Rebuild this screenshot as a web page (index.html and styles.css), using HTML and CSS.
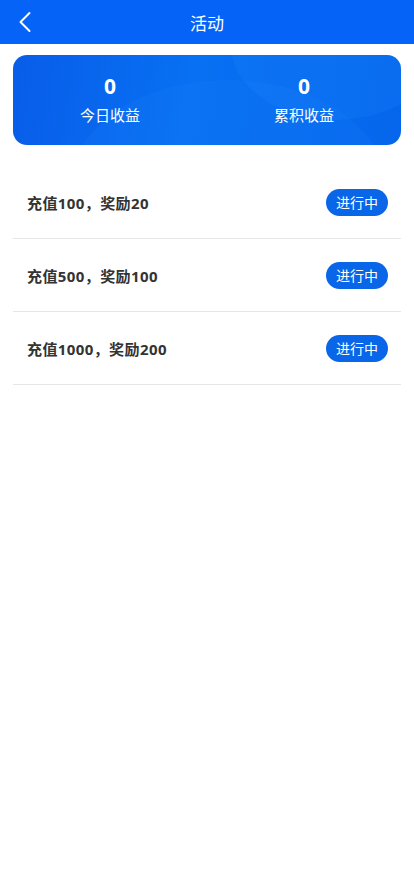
FILE: index.html
```html
<!DOCTYPE html>
<html lang="zh-CN">

<head>
  <meta charset="UTF-8">
  <meta name="viewport" content="width=device-width, initial-scale=1.0">
  <title>活动</title>
  <link rel="stylesheet" href="styles.css">
</head>

<body>
  <div class="page-wrapper">
    <div class="nav-bar">
      <a class="back-btn" href="#">
        <svg width="14" height="22" viewBox="0 0 14 22" fill="none">
          <path d="M11.5 2 L2.5 11 L11.5 20" stroke="#fff" stroke-width="2" stroke-linecap="round" stroke-linejoin="round" />
        </svg>
      </a>
      <h1>活动</h1>
    </div>

    <div class="summary-card">
      <div class="stat">
        <div class="stat-value">0</div>
        <div class="stat-label">今日收益</div>
      </div>
      <div class="stat">
        <div class="stat-value">0</div>
        <div class="stat-label">累积收益</div>
      </div>
    </div>

    <ul class="activity-list">
      <li class="activity-item">
        <span class="activity-title">充值100，奖励20</span>
        <span class="status-badge">进行中</span>
      </li>
      <li class="activity-item">
        <span class="activity-title">充值500，奖励100</span>
        <span class="status-badge">进行中</span>
      </li>
      <li class="activity-item">
        <span class="activity-title">充值1000，奖励200</span>
        <span class="status-badge">进行中</span>
      </li>
    </ul>
  </div>
</body>

</html>
```

FILE: styles.css
```css
* {
  margin: 0;
  padding: 0;
  box-sizing: border-box;
  font-family: "Noto Sans", "Noto Sans CJK SC", sans-serif;
}

html,
body {
  width: 100%;
  height: 100%;
  background: #fff;
}

.nav-bar {
  height: 44px;
  background-color: #0563f7;
  display: flex;
  align-items: center;
  justify-content: center;
  position: relative;
}

.nav-bar h1 {
  font-size: 17px;
  font-weight: 400;
  color: #fff;
}

.back-btn {
  position: absolute;
  left: 18px;
  top: 11px;
  display: flex;
}

.summary-card {
  margin: 11px 13px 0;
  height: 90px;
  border-radius: 14px;
  background: linear-gradient(100deg, #095de8 0%, #0770f3 45%, #0566ec 100%);
  display: flex;
  align-items: center;
  position: relative;
  overflow: hidden;
}

.summary-card::before {
  content: "";
  position: absolute;
  left: 55px;
  top: 25px;
  width: 320px;
  height: 220px;
  border-radius: 50%;
  background: rgba(40, 140, 255, 0.12);
}

.summary-card::after {
  content: "";
  position: absolute;
  right: -40px;
  top: -85px;
  width: 210px;
  height: 150px;
  border-radius: 50%;
  background: rgba(40, 140, 255, 0.16);
}

.stat {
  flex: 1;
  text-align: center;
  color: #fff;
  position: relative;
  z-index: 1;
}

.stat-value {
  font-size: 21px;
  font-weight: 700;
  line-height: 26px;
}

.stat-label {
  font-size: 15px;
  line-height: 24px;
  margin-top: 4px;
}

.activity-list {
  list-style: none;
  margin: 21px 13px 0;
}

.activity-item {
  height: 73px;
  display: flex;
  align-items: center;
  justify-content: space-between;
  padding: 0 13px 0 14px;
  border-bottom: 1px solid #e6e6e6;
}

.activity-title {
  font-size: 15px;
  font-weight: 700;
  color: #333;
  letter-spacing: 0.4px;
}

.status-badge {
  height: 27px;
  line-height: 27px;
  padding: 0 10px;
  border-radius: 14px;
  background-color: #0a66e9;
  color: #fff;
  font-size: 14px;
}
```
